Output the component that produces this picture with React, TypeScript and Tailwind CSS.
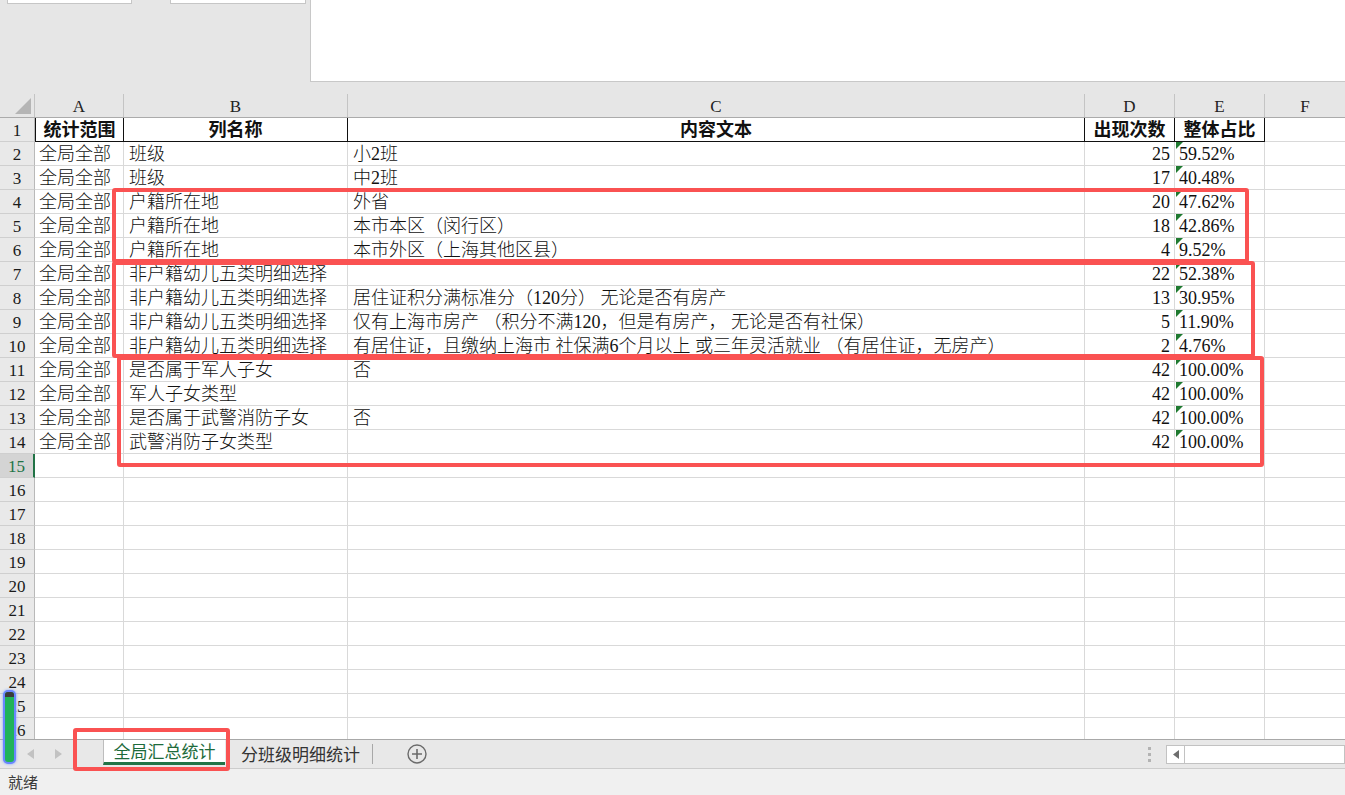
import React from 'react'

type Row = [string, string, string, number, string]

// sheet data: 统计范围 / 列名称 / 内容文本 / 出现次数 / 整体占比
const data: Row[] = [
  ['全局全部', '班级', '小2班', 25, '59.52%'],
  ['全局全部', '班级', '中2班', 17, '40.48%'],
  ['全局全部', '户籍所在地', '外省', 20, '47.62%'],
  ['全局全部', '户籍所在地', '本市本区（闵行区）', 18, '42.86%'],
  ['全局全部', '户籍所在地', '本市外区（上海其他区县）', 4, '9.52%'],
  ['全局全部', '非户籍幼儿五类明细选择', '', 22, '52.38%'],
  ['全局全部', '非户籍幼儿五类明细选择', '居住证积分满标准分（120分） 无论是否有房产', 13, '30.95%'],
  ['全局全部', '非户籍幼儿五类明细选择', '仅有上海市房产 （积分不满120，但是有房产， 无论是否有社保）', 5, '11.90%'],
  ['全局全部', '非户籍幼儿五类明细选择', '有居住证，且缴纳上海市 社保满6个月以上 或三年灵活就业 （有居住证，无房产）', 2, '4.76%'],
  ['全局全部', '是否属于军人子女', '否', 42, '100.00%'],
  ['全局全部', '军人子女类型', '', 42, '100.00%'],
  ['全局全部', '是否属于武警消防子女', '否', 42, '100.00%'],
  ['全局全部', '武警消防子女类型', '', 42, '100.00%'],
]

const GRID = 'grid grid-cols-[35px_89px_224px_737px_90px_90px_1fr]'
const SERIF = "font-['Liberation_Serif','Noto_Sans_CJK_SC',serif]"
const SANS = "font-['Noto_Sans_CJK_SC','Liberation_Sans',sans-serif]"

const TextFlag = () => (
  <svg className="absolute left-[1px] top-0" width="7" height="7" viewBox="0 0 7 7">
    <polygon points="0,0 7,0 0,7" fill="#1f7a30" />
  </svg>
)

const cell = 'relative flex items-center pt-[1px] whitespace-nowrap border-r border-b border-[#d9d9d9] text-[18px] leading-none text-[#111]'

const RowHead = ({ n, selected }: { n: number; selected?: boolean }) => (
  <div
    className={
      'flex items-center justify-center pt-[1px] border-b border-[#cfcfcf] text-[17px] leading-none ' +
      (selected
        ? 'bg-[#d4d4d4] text-[#217346] border-r-2 border-r-[#217346]'
        : 'bg-[#e9e9e9] text-[#1a1a1a] border-r border-r-[#b9b9b9]')
    }
  >
    {n}
  </div>
)

const HeaderRow = () => {
  const titles = ['统计范围', '列名称', '内容文本', '出现次数', '整体占比']
  return (
    <div className={GRID + ' h-[24px]'}>
      <RowHead n={1} />
      {titles.map((t, i) => (
        <div
          key={t}
          className={
            cell +
            ' justify-center font-bold border-r-[#111] border-b-[#111] ' +
            (i === 0 ? 'border-l border-l-[#111]' : '')
          }
        >
          {t}
        </div>
      ))}
      <div className={cell + ' border-r-0'} />
    </div>
  )
}

const DataRow = ({ n, row }: { n: number; row?: Row }) => (
  <div className={GRID + ' h-[24px]'}>
    <RowHead n={n} selected={n === 15} />
    <div className={cell + ' pl-[4px] font-light'}>{row?.[0]}</div>
    <div className={cell + ' pl-[5px] font-light'}>{row?.[1]}</div>
    <div className={cell + ' pl-[5px] font-light'}>{row?.[2]}</div>
    <div className={cell + ' justify-end pr-[4px]'}>{row?.[3]}</div>
    <div className={cell + ' pl-[4px]'}>
      {row && <TextFlag />}
      {row?.[4]}
    </div>
    <div className={cell + ' border-r-0'} />
  </div>
)

const ColumnHeaders = () => (
  <div className={GRID + ' h-[24px] bg-[#e6e6e6] border-b border-[#ababab] text-[17px] leading-none text-[#222]'}>
    <div className="relative border-r border-[#c4c4c4]">
      <svg className="absolute left-[15px] top-[4px]" width="16" height="16" viewBox="0 0 16 16">
        <polygon points="16,0 16,16 0,16" fill="#b5b5b5" />
      </svg>
    </div>
    {['A', 'B', 'C', 'D', 'E', 'F'].map((c, i) => (
      <div
        key={c}
        className={'flex items-center justify-center pt-[2px] ' + (i < 5 ? 'border-r border-[#c4c4c4]' : '')}
      >
        {c}
      </div>
    ))}
  </div>
)

const Annotation = ({ className }: { className: string }) => (
  <div className={'absolute border-[4px] border-[#fa5252] rounded-[3px] pointer-events-none ' + className} />
)

export default function App() {
  return (
    <div className={'relative w-[1345px] h-[795px] overflow-hidden flex flex-col bg-white ' + SERIF}>
      {/* ribbon / formula bar strip */}
      <div className="h-[94px] shrink-0 bg-[#e6e6e6] flex">
        <div className="w-[310px] flex items-start pl-[7px] gap-[38px]">
          <div className="w-[125px] h-[4px] bg-white border border-t-0 border-[#c6c6c6]" />
          <div className="w-[136px] h-[4px] bg-white border border-t-0 border-[#c6c6c6]" />
        </div>
        <div className="flex-1 h-[82px] bg-white border-l border-b border-[#c8c8c8]" />
      </div>

      {/* sheet grid */}
      <div className="flex-1 overflow-hidden">
        <ColumnHeaders />
        <HeaderRow />
        {Array.from({ length: 25 }, (_, i) => (
          <DataRow key={i} n={i + 2} row={data[i]} />
        ))}
      </div>

      {/* sheet tabs */}
      <div className={'h-[29px] shrink-0 bg-[#e8e8e8] border-t border-[#a8a8a8] flex items-stretch ' + SANS}>
        <div className="w-[103px] flex items-center">
          <svg className="ml-[27px]" width="7" height="10" viewBox="0 0 7 10">
            <polygon points="7,0 7,10 0,5" fill="#c2c2c2" />
          </svg>
          <svg className="ml-[21px]" width="7" height="10" viewBox="0 0 7 10">
            <polygon points="0,0 0,10 7,5" fill="#c2c2c2" />
          </svg>
        </div>
        <div className="w-[122px] mb-[3px] bg-white border-l border-[#bdbdbd] border-b-[3px] border-b-[#217346] flex items-center justify-center text-[17px] text-[#1d6b3b]">
          全局汇总统计
        </div>
        <div className="flex items-center pl-[16px] pr-[12px] text-[17px] text-[#333]">分班级明细统计</div>
        <div className="w-px my-[4px] bg-[#a8a8a8]" />
        <div className="flex items-center ml-[34px]">
          <svg width="20" height="20" viewBox="0 0 20 20">
            <circle cx="10" cy="10" r="9" fill="none" stroke="#6b6b6b" strokeWidth="1.4" />
            <path d="M10 5v10M5 10h10" stroke="#6b6b6b" strokeWidth="1.6" />
          </svg>
        </div>
        <div className="flex-1" />
        <div className="flex flex-col justify-center gap-[3px] mr-[15px]">
          <div className="w-[3px] h-[3px] bg-[#b3b3b3]" />
          <div className="w-[3px] h-[3px] bg-[#b3b3b3]" />
          <div className="w-[3px] h-[3px] bg-[#b3b3b3]" />
        </div>
        <div className="flex items-center">
          <div className="w-[19px] h-[19px] bg-white border border-[#c2c2c2] flex items-center justify-center">
            <svg width="6" height="9" viewBox="0 0 6 9">
              <polygon points="6,0 6,9 0,4.5" fill="#6e6e6e" />
            </svg>
          </div>
          <div className="w-[160px] h-[19px] bg-white border border-l-0 border-[#c2c2c2]" />
        </div>
      </div>

      {/* status bar */}
      <div className={'h-[27px] shrink-0 bg-[#f0f0f0] border-t border-[#cccccc] flex items-center pl-[8px] text-[15px] text-[#3a3a3a] ' + SANS}>
        就绪
      </div>

      {/* floating green handle on the left edge */}
      <div className="absolute left-[3px] top-[690px] w-[13px] h-[74px] rounded-[5px] border-2 border-[#6a86ff] bg-[#20b35a] shadow-[0_0_3px_#7aa0ff] overflow-hidden">
        <div className="h-[5px] bg-[#3b3b3b]" />
      </div>

      {/* highlight boxes */}
      <Annotation className="left-[112px] top-[188px] w-[1137px] h-[75px]" />
      <Annotation className="left-[112px] top-[261px] w-[1143px] h-[97px]" />
      <Annotation className="left-[117px] top-[356px] w-[1147px] h-[111px]" />
      <Annotation className="left-[73px] top-[728px] w-[157px] h-[43px]" />
    </div>
  )
}
